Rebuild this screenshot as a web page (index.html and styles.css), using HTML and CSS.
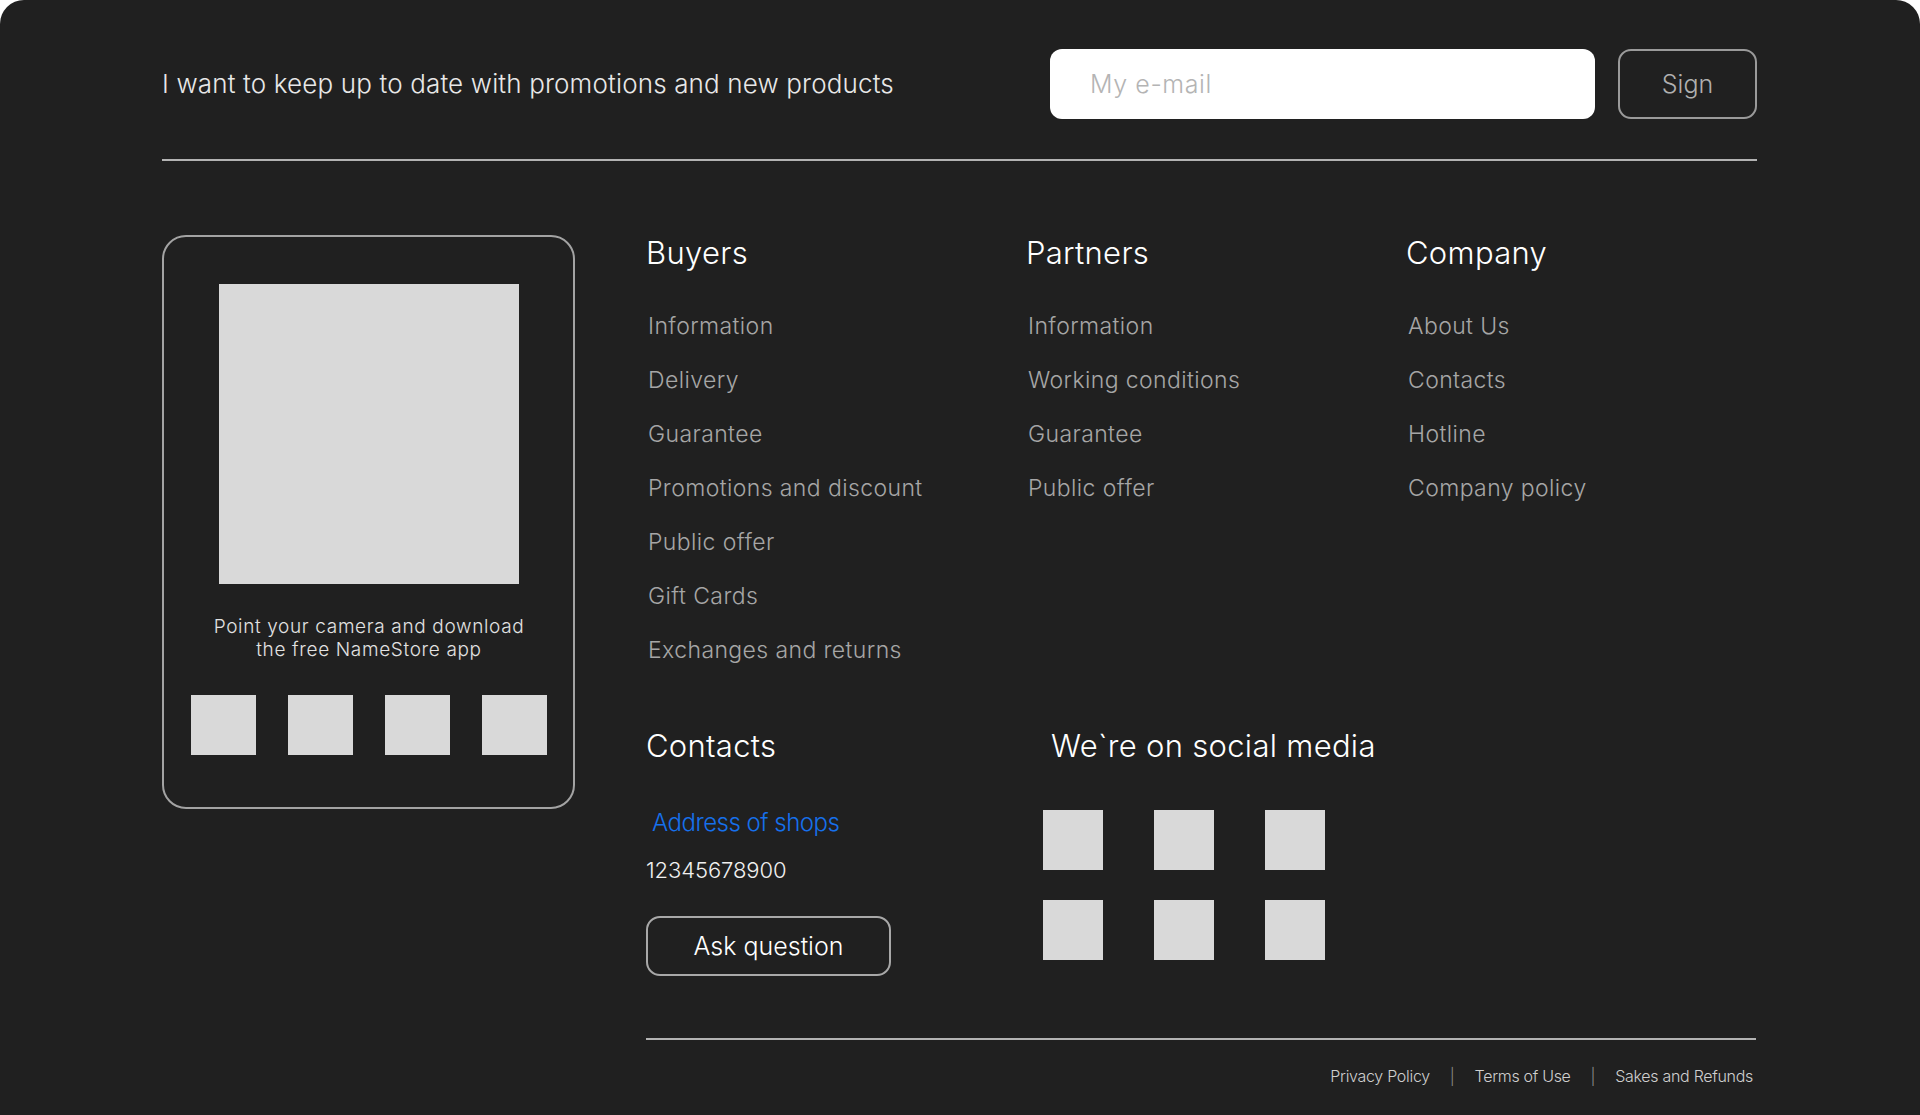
FILE: index.html
```html
<!DOCTYPE html>
<html lang="en">
<head>
<meta charset="utf-8">
<title>NameStore footer</title>
<link rel="stylesheet" href="styles.css">
</head>
<body>
<footer class="footer">
  <section class="subscribe">
    <p class="subscribe-text">I want to keep up to date with promotions and new products</p>
    <form class="subscribe-form">
      <input class="email" type="email" placeholder="My e-mail">
      <button class="sign" type="button">Sign</button>
    </form>
  </section>
  <hr class="divider">
  <div class="main">
    <aside class="app-card">
      <div class="qr"></div>
      <p class="app-caption">Point your camera and download<br>the free NameStore app</p>
      <div class="stores">
        <span class="store"></span>
        <span class="store"></span>
        <span class="store"></span>
        <span class="store"></span>
      </div>
    </aside>
    <div class="content">
      <nav class="columns">
        <div class="col">
          <h3 class="heading">Buyers</h3>
          <ul class="links">
            <li>Information</li>
            <li>Delivery</li>
            <li>Guarantee</li>
            <li>Promotions and discount</li>
            <li>Public offer</li>
            <li>Gift Cards</li>
            <li>Exchanges and returns</li>
          </ul>
        </div>
        <div class="col">
          <h3 class="heading">Partners</h3>
          <ul class="links">
            <li>Information</li>
            <li>Working conditions</li>
            <li>Guarantee</li>
            <li>Public offer</li>
          </ul>
        </div>
        <div class="col">
          <h3 class="heading">Company</h3>
          <ul class="links">
            <li>About Us</li>
            <li>Contacts</li>
            <li>Hotline</li>
            <li>Company policy</li>
          </ul>
        </div>
      </nav>
      <div class="lower">
        <div class="contacts">
          <h3 class="heading">Contacts</h3>
          <a class="address">Address of shops</a>
          <p class="phone">12345678900</p>
          <button class="ask" type="button">Ask question</button>
        </div>
        <div class="social">
          <h3 class="heading social-heading">We`re on social media</h3>
          <div class="social-grid">
            <span class="sq"></span><span class="sq"></span><span class="sq"></span>
            <span class="sq"></span><span class="sq"></span><span class="sq"></span>
          </div>
        </div>
      </div>
      <hr class="bottom-line">
      <div class="legal">
        <span>Privacy Policy</span>
        <span class="sep">|</span>
        <span>Terms of Use</span>
        <span class="sep">|</span>
        <span>Sakes and Refunds</span>
      </div>
    </div>
  </div>
</footer>
</body>
</html>
```

FILE: styles.css
```css
* { box-sizing: border-box; }

html, body {
  margin: 0;
  padding: 0;
  background: #ffffff;
}

body {
  font-family: "Inter", "Liberation Sans", sans-serif;
  font-weight: 300;
}

.footer {
  background: #202020;
  border-radius: 24px 24px 0 0;
  min-height: 1115px;
  padding: 49px 163px 0 162px;
  color: #ffffff;
}

/* subscribe row */
.subscribe {
  display: flex;
  align-items: center;
  justify-content: space-between;
  height: 70px;
}

.subscribe-text {
  margin: 0;
  font-size: 26px;
  line-height: 30px;
  color: #e8e8e8;
  letter-spacing: 0.15px;
}

.subscribe-form {
  display: flex;
  gap: 23px;
  height: 70px;
}

.email {
  width: 545px;
  height: 70px;
  border: none;
  border-radius: 12px;
  background: #ffffff;
  padding: 0 0 0 40px;
  font-family: inherit;
  font-weight: 300;
  font-size: 25px;
  letter-spacing: 0.6px;
  color: #333;
  outline: none;
}

.email::placeholder { color: #b4b4b4; }

.sign {
  width: 139px;
  height: 70px;
  border: 2px solid #9a9a9a;
  border-radius: 13px;
  background: transparent;
  color: #b0b0b0;
  font-family: inherit;
  font-weight: 300;
  font-size: 25px;
  padding: 0;
}

.divider {
  margin: 40px 0 0 0;
  border: none;
  height: 2px;
  background: #b3b3b3;
  width: 1595px;
}

/* main */
.main {
  display: flex;
  gap: 71px;
  margin-top: 74px;
  align-items: flex-start;
}

.app-card {
  width: 413px;
  height: 574px;
  flex: none;
  border: 2px solid #a3a3a3;
  border-radius: 24px;
  padding: 47px 26px 0 27px;
  display: flex;
  flex-direction: column;
  align-items: center;
}

.qr {
  width: 300px;
  height: 300px;
  background: #d9d9d9;
  flex: none;
}

.app-caption {
  margin: 31px 0 0 0;
  text-align: center;
  font-size: 19px;
  line-height: 23px;
  color: #e2e2e2;
  letter-spacing: 0.65px;
}

.stores {
  display: flex;
  gap: 32px;
  margin-top: 34px;
  width: 100%;
}

.store {
  width: 65px;
  height: 60px;
  background: #d9d9d9;
  flex: none;
}

.content {
  width: 1111px;
}

.columns {
  display: grid;
  grid-template-columns: 380px 380px 351px;
}

.heading {
  margin: 0;
  font-size: 31px;
  line-height: 36px;
  font-weight: 300;
  color: #ffffff;
  letter-spacing: 0.3px;
}

.links {
  list-style: none;
  margin: 28px 0 0 0;
  padding: 0 0 0 2px;
}

.links li {
  font-size: 23px;
  line-height: 54px;
  color: #a6a6a6;
  letter-spacing: 0.4px;
}

.lower {
  display: flex;
  margin-top: 51px;
}

.contacts {
  width: 397px;
  display: flex;
  flex-direction: column;
  align-items: flex-start;
}

.address {
  margin-top: 44px;
  padding-left: 6px;
  font-size: 24px;
  line-height: 30px;
  color: #1670ec;
  letter-spacing: -0.5px;
}

.phone {
  margin: 17px 0 0 0;
  font-size: 22px;
  line-height: 30px;
  color: #f0f0f0;
  letter-spacing: -0.1px;
}

.ask {
  margin-top: 31px;
  width: 245px;
  height: 60px;
  border: 2px solid #a8a8a8;
  border-radius: 14px;
  background: transparent;
  color: #ffffff;
  font-family: inherit;
  font-weight: 300;
  font-size: 25px;
  padding: 0;
  letter-spacing: 0px;
}

.social-heading {
  padding-left: 8px;
}

.social-grid {
  margin-top: 46px;
  display: grid;
  grid-template-columns: repeat(3, 60px);
  column-gap: 51px;
  row-gap: 30px;
}

.sq {
  width: 60px;
  height: 60px;
  background: #d9d9d9;
}

.bottom-line {
  margin: 62px 0 0 0;
  border: none;
  height: 2px;
  background: #b3b3b3;
  width: 1110px;
}

.legal {
  margin-top: 26px;
  display: flex;
  justify-content: flex-end;
  gap: 20px;
  padding-right: 4px;
  font-size: 16px;
  line-height: 20px;
  color: #cfcfcf;
  letter-spacing: -0.3px;
}

.legal .sep { color: #8a8a8a; }
```
